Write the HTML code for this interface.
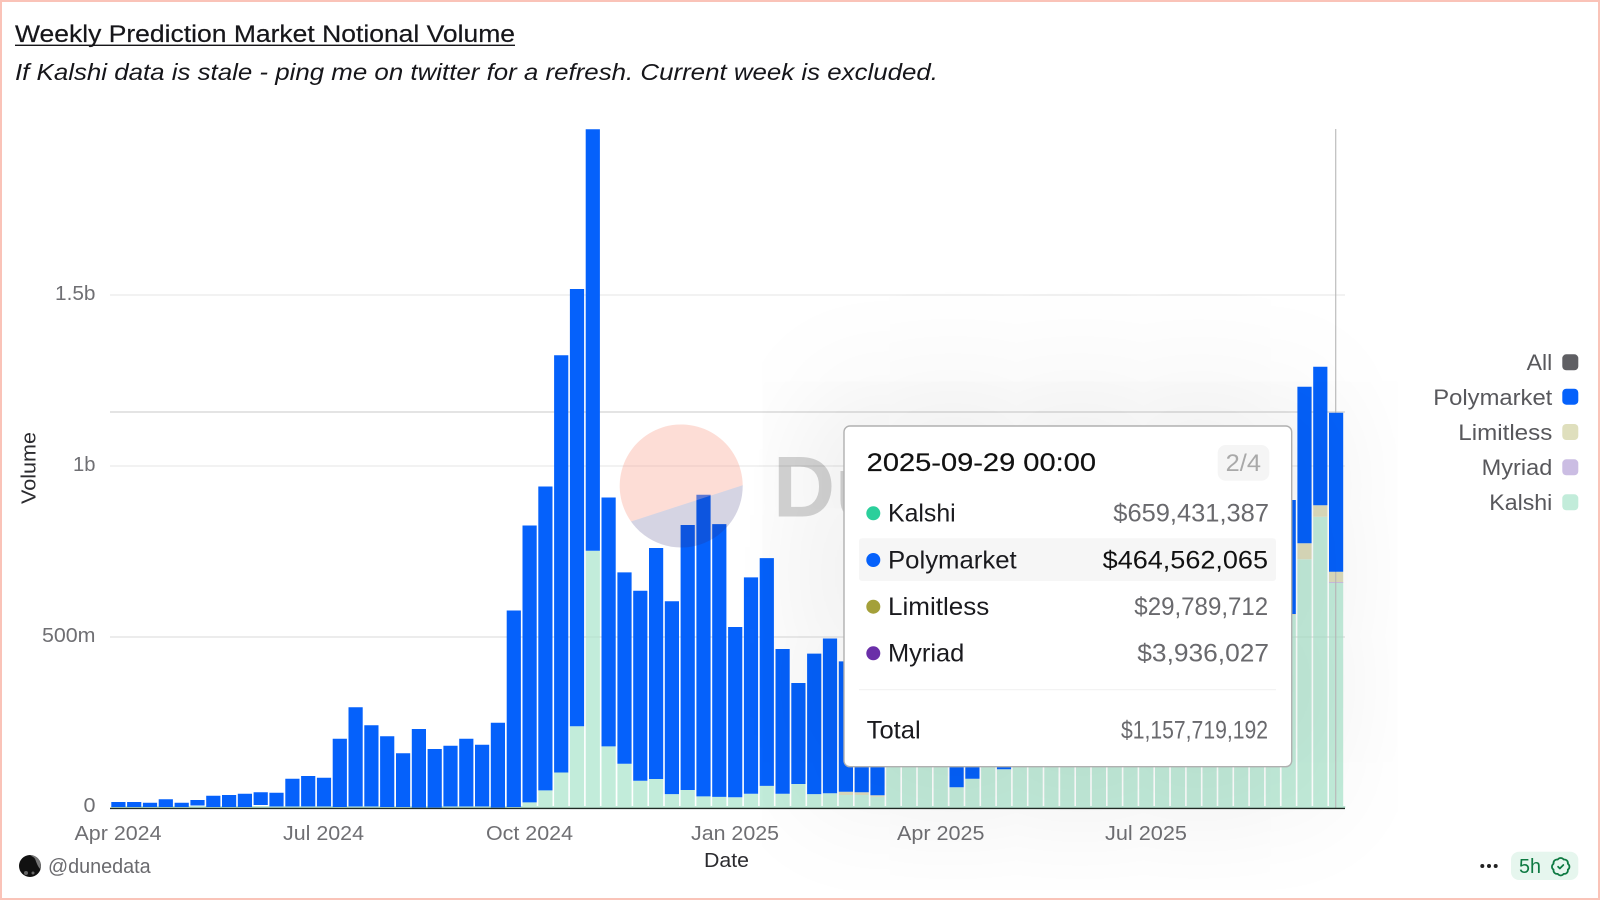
<!DOCTYPE html>
<html lang="en">
<head>
<meta charset="utf-8">
<title>Weekly Prediction Market Notional Volume</title>
<style>
html,body{margin:0;padding:0;width:1600px;height:900px;overflow:hidden;background:#fff;font-family:"Liberation Sans",sans-serif}
svg{position:absolute;left:0;top:0;display:block}
text{font-family:"Liberation Sans",sans-serif}
#shadow{position:absolute;left:844px;top:426px;width:448px;height:341px;border-radius:6px;box-shadow:0 0 300px 30px rgba(0,0,0,.085)}
#clip{position:absolute;left:0;top:0;width:1600px;height:900px;overflow:hidden}
#frame{position:absolute;left:0;top:0;width:1596px;height:896px;border:2px solid #fac3b8}
</style>
</head>
<body>
<svg width="1600" height="900" viewBox="0 0 1600 900">
  <!-- title -->
  <text x="15" y="42" font-size="24.500" fill="#16161a" stroke="#16161a" stroke-width=".2" textLength="500" lengthAdjust="spacingAndGlyphs">Weekly Prediction Market Notional Volume</text>
  <rect x="15" y="44.600" width="500" height="1.400" fill="#16161a"/>
  <text x="15" y="80" font-size="23.500" font-style="italic" fill="#16161a" textLength="923" lengthAdjust="spacingAndGlyphs">If Kalshi data is stale - ping me on twitter for a refresh. Current week is excluded.</text>

  <!-- horizontal guides behind the bars -->
  <g stroke="#e9e9e9" stroke-width="1.200">
    <path d="M110 295H1345M110 466H1345M110 637H1345"/>
  </g>
  <path d="M110 412H1345" stroke="#d4d4d4" stroke-width="1.300"/>

  <!-- green Kalshi -->
  <path fill="#c2ecda" d="M111.300 806h1234v2h-1234z"/>
  <path fill="#c2ecda" d="M506.700 807h14.200V808h-14.200zM522.500 802.400h14.200V808h-14.200zM538.300 790.400h14.200V808h-14.200zM554.100 772.500h14.200V808h-14.200zM569.900 726.200h14.200V808h-14.200zM585.700 550.800h14.200V808h-14.200zM601.500 746.400h14.200V808h-14.200zM617.400 763.800h14.200V808h-14.200zM633.200 780.800h14.200V808h-14.200zM649 779h14.200V808h-14.200zM664.800 794.100h14.200V808h-14.200zM680.600 790h14.200V808h-14.200zM696.400 796.400h14.200V808h-14.200zM712.200 796.900h14.200V808h-14.200zM728.100 797.300h14.200V808h-14.200zM743.900 793.700h14.200V808h-14.200zM759.700 785.900h14.200V808h-14.200zM775.500 793.700h14.200V808h-14.200zM791.300 784h14.200V808h-14.200zM807.100 794.100h14.200V808h-14.200zM822.900 793.200h14.200V808h-14.200zM838.800 795h14.200V808h-14.200zM854.600 795h14.200V808h-14.200zM870.400 796.700h14.200V808h-14.200zM886.200 700h14.200V808h-14.200zM902 700h14.200V808h-14.200zM917.800 700h14.200V808h-14.200zM933.600 700h14.200V808h-14.200zM949.500 787.300h14.200V808h-14.200zM965.300 778.700h14.200V808h-14.200zM981.100 700h14.200V808h-14.200zM996.900 769.300h14.200V808h-14.200zM1012.700 700h14.200V808h-14.200zM1028.500 700h14.200V808h-14.200zM1044.300 700h14.200V808h-14.200zM1060.200 700h14.200V808h-14.200zM1076 700h14.200V808h-14.200zM1091.800 700h14.200V808h-14.200zM1107.600 700h14.200V808h-14.200zM1123.400 700h14.200V808h-14.200zM1139.200 700h14.200V808h-14.200zM1155 700h14.200V808h-14.200zM1170.900 700h14.200V808h-14.200zM1186.700 700h14.200V808h-14.200zM1202.500 700h14.200V808h-14.200zM1218.300 700h14.200V808h-14.200zM1234.100 700h14.200V808h-14.200zM1249.900 700h14.200V808h-14.200zM1265.700 700h14.200V808h-14.200zM1281.600 615h14.200V808h-14.200zM1297.400 559.300h14.200V808h-14.200zM1313.200 516.700h14.200V808h-14.200zM1329 582.700h14.200V808h-14.200z"/>
  <!-- tan Limitless -->
  <path fill="#dcdcbc" d="M838.800 791.700h14.200V795h-14.200zM854.600 792.300h14.200V795h-14.200zM870.400 795.300h14.200V796.700h-14.200zM1281.600 614h14.200V615h-14.200zM1297.400 543.300h14.200V559.300h-14.200zM1313.200 505.300h14.200V516.700h-14.200zM1329 571.700h14.200V582.700h-14.200z"/>
  <rect x="1329" y="582" width="14.200" height="1" fill="#cbbde3"/>

  <!-- guides across translucent green -->
  <path d="M110 637H1345" stroke="#000" stroke-opacity=".05" stroke-width="1"/>
  <path d="M1335.700 129V808" stroke="#bdbdbd" stroke-width="1.200"/>

  <!-- blue Polymarket -->
  <path fill="#0561fb" d="M111.300 802h14.200V807h-14.200zM127.100 802h14.200V807h-14.200zM142.900 802.700h14.200V807h-14.200zM158.700 799.300h14.200V807h-14.200zM174.600 802.700h14.200V807h-14.200zM190.400 800h14.200V805.500h-14.200zM206.200 795.700h14.200V807h-14.200zM222 795h14.200V807h-14.200zM237.800 793.700h14.200V807h-14.200zM253.600 792.300h14.200V805h-14.200zM269.400 792.700h14.200V806.500h-14.200zM285.300 778.700h14.200V806.500h-14.200zM301.100 776h14.200V806.500h-14.200zM316.900 777.700h14.200V806.500h-14.200zM332.700 738.700h14.200V807h-14.200zM348.500 707.300h14.200V806.500h-14.200zM364.300 725.300h14.200V806.500h-14.200zM380.100 736.300h14.200V807h-14.200zM396 753.300h14.200V807h-14.200zM411.800 729h14.200V807.500h-14.200zM427.600 749h14.200V807.500h-14.200zM443.400 745.700h14.200V806.500h-14.200zM459.200 738.700h14.200V806.500h-14.200zM475 744.700h14.200V806.500h-14.200zM490.800 722.700h14.200V807.500h-14.200zM506.700 610.500h14.200V807h-14.200zM522.500 525.500h14.200V802.400h-14.200zM538.300 486.500h14.200V790.400h-14.200zM554.100 355.200h14.200V772.500h-14.200zM569.900 289h14.200V726.200h-14.200zM585.700 129.300h14.200V550.800h-14.200zM601.500 497.500h14.200V746.400h-14.200zM617.400 572.400h14.200V763.800h-14.200zM633.200 590.700h14.200V780.800h-14.200zM649 548h14.200V779h-14.200zM664.800 601.300h14.200V794.100h-14.200zM680.600 525h14.200V790h-14.200zM696.400 494.800h14.200V796.400h-14.200zM712.200 524.100h14.200V796.900h-14.200zM728.100 627h14.200V797.300h-14.200zM743.900 577.400h14.200V793.700h-14.200zM759.700 558.100h14.200V785.900h-14.200zM775.500 649h14.200V793.700h-14.200zM791.300 683h14.200V784h-14.200zM807.100 653.600h14.200V794.100h-14.200zM822.900 638.500h14.200V793.200h-14.200zM838.800 661.400h14.200V791.700h-14.200zM854.600 680h14.200V792.300h-14.200zM870.400 700h14.200V795.300h-14.200zM949.500 720h14.200V787.300h-14.200zM965.300 720h14.200V778.700h-14.200zM996.900 720h14.200V769.300h-14.200zM1281.600 500h14.200V614h-14.200zM1297.400 386.700h14.200V543.300h-14.200zM1313.200 366.700h14.200V505.300h-14.200zM1329 412.700h14.200V571.700h-14.200z"/>

  <!-- axis baseline -->
  <path d="M110 808.400H1345" stroke="#1f2a24" stroke-width="1.400"/>

  <!-- watermark -->
  <path d="M631 521.500A61.500 61.500 0 1 1 742.700 485.200Z" fill="#f9a08e" fill-opacity=".36"/>
  <path d="M631 521.500L742.700 485.200A61.500 61.500 0 0 1 631 521.500Z" fill="#2c2a74" fill-opacity=".2"/>
  <text x="773" y="516.500" font-size="86" font-weight="700" fill="#000" fill-opacity=".17">Dune</text>

  <!-- y labels -->
  <g font-size="20.500" fill="#6f6f73">
    <text x="55" y="300" textLength="40.500" lengthAdjust="spacingAndGlyphs">1.5b</text>
    <text x="73" y="471" textLength="22.500" lengthAdjust="spacingAndGlyphs">1b</text>
    <text x="42" y="642" textLength="53.500" lengthAdjust="spacingAndGlyphs">500m</text>
    <text x="83.500" y="812" textLength="12" lengthAdjust="spacingAndGlyphs">0</text>
  </g>
  <!-- x labels -->
  <g font-size="20" fill="#6f6f73">
    <text x="74.500" y="840" textLength="87" lengthAdjust="spacingAndGlyphs">Apr 2024</text>
    <text x="283" y="840" textLength="81" lengthAdjust="spacingAndGlyphs">Jul 2024</text>
    <text x="486" y="840" textLength="87" lengthAdjust="spacingAndGlyphs">Oct 2024</text>
    <text x="691" y="840" textLength="88" lengthAdjust="spacingAndGlyphs">Jan 2025</text>
    <text x="897" y="840" textLength="87.500" lengthAdjust="spacingAndGlyphs">Apr 2025</text>
    <text x="1105" y="840" textLength="82" lengthAdjust="spacingAndGlyphs">Jul 2025</text>
  </g>
  <text x="704" y="867" font-size="20" fill="#2b2b2f" textLength="45" lengthAdjust="spacingAndGlyphs">Date</text>
  <text transform="translate(35.500 504) rotate(-90)" font-size="20" fill="#2b2b2f" textLength="72" lengthAdjust="spacingAndGlyphs">Volume</text>

  <!-- legend -->
  <g font-size="22" fill="#58585c">
    <text x="1526.700" y="370" textLength="25.600" lengthAdjust="spacingAndGlyphs">All</text>
    <text x="1433.300" y="405" textLength="119" lengthAdjust="spacingAndGlyphs">Polymarket</text>
    <text x="1458.300" y="440" textLength="94" lengthAdjust="spacingAndGlyphs">Limitless</text>
    <text x="1481.700" y="475" textLength="70.600" lengthAdjust="spacingAndGlyphs">Myriad</text>
    <text x="1489.300" y="510" textLength="63" lengthAdjust="spacingAndGlyphs">Kalshi</text>
  </g>
  <rect x="1562.300" y="354.300" width="16" height="16" rx="4" fill="#5f5f63"/>
  <rect x="1562.300" y="388.700" width="16" height="16" rx="4" fill="#0561fb"/>
  <rect x="1562.300" y="424" width="16" height="16" rx="4" fill="#dfdfbd"/>
  <rect x="1562.300" y="459.300" width="16" height="16" rx="4" fill="#cbbde3"/>
  <rect x="1562.300" y="494.300" width="16" height="16" rx="4" fill="#c2ecda"/>

  <!-- footer left -->
  <circle cx="30" cy="866" r="11" fill="#111"/>
  <path d="M30 855a11 11 0 0 1 10.500 14c-2-1-4-6-5-9s-3-3-5.500-5z" fill="#777"/>
  <circle cx="26" cy="873" r="2" fill="#666"/>
  <circle cx="33" cy="873" r="1.500" fill="#666"/>
  <text x="48" y="873" font-size="20" fill="#6a6a6e" textLength="102.700" lengthAdjust="spacingAndGlyphs">@dunedata</text>

  <!-- footer right -->
  <circle cx="1482.300" cy="866" r="2" fill="#222"/>
  <circle cx="1489" cy="866" r="2" fill="#222"/>
  <circle cx="1495.700" cy="866" r="2" fill="#222"/>
  <rect x="1511" y="851.700" width="67.300" height="28.300" rx="8" fill="#e6f6ee"/>
  <text x="1519" y="873" font-size="20" fill="#0e7a42" textLength="22" lengthAdjust="spacingAndGlyphs">5h</text>
  <g transform="translate(1550.200 856.200) scale(.875)" fill="none" stroke="#0e7a42" stroke-width="2" stroke-linecap="round" stroke-linejoin="round">
    <path d="M3.850 8.620a4 4 0 0 1 4.780-4.770 4 4 0 0 1 6.740 0 4 4 0 0 1 4.780 4.780 4 4 0 0 1 0 6.740 4 4 0 0 1-4.770 4.780 4 4 0 0 1-6.750 0 4 4 0 0 1-4.780-4.770 4 4 0 0 1 0-6.760Z"/>
    <path d="m9 12 2 2 4-4"/>
  </g>
</svg>

<div id="clip"><div id="shadow"></div></div>

<svg width="1600" height="900" viewBox="0 0 1600 900">
  <rect x="844" y="426" width="447.700" height="340.700" rx="6" fill="#fff" stroke="#b0b0b0" stroke-width="1.400"/>
  <text x="866.700" y="471" font-size="25" fill="#111" stroke="#111" stroke-width=".2" textLength="229.300" lengthAdjust="spacingAndGlyphs">2025-09-29 00:00</text>
  <rect x="1217.700" y="445" width="51.600" height="35.700" rx="8" fill="#f5f5f5"/>
  <text x="1225.700" y="471" font-size="24" fill="#a9a9a9" textLength="35.300" lengthAdjust="spacingAndGlyphs">2/4</text>

  <rect x="859" y="538.300" width="417" height="42.700" rx="3" fill="#f6f6f6"/>

  <circle cx="873.300" cy="513.300" r="7" fill="#2bcf9b"/>
  <circle cx="873.300" cy="560" r="7" fill="#0561fb"/>
  <circle cx="873.300" cy="606.700" r="7" fill="#a4a03a"/>
  <circle cx="873.300" cy="653.300" r="7" fill="#6a2fa8"/>

  <g font-size="25" fill="#1a1a1e">
    <text x="888" y="521.700" textLength="67.700" lengthAdjust="spacingAndGlyphs">Kalshi</text>
    <text x="888" y="568.300" textLength="128.700" lengthAdjust="spacingAndGlyphs">Polymarket</text>
    <text x="888" y="615" textLength="101.300" lengthAdjust="spacingAndGlyphs">Limitless</text>
    <text x="888" y="661.700" textLength="76.300" lengthAdjust="spacingAndGlyphs">Myriad</text>
    <text x="866.700" y="738.300" textLength="54" lengthAdjust="spacingAndGlyphs">Total</text>
  </g>
  <g font-size="25" fill="#69696d">
    <text x="1113.300" y="521.700" textLength="155.700" lengthAdjust="spacingAndGlyphs">$659,431,387</text>
    <text x="1102.700" y="568.300" fill="#111" textLength="165.300" lengthAdjust="spacingAndGlyphs">$464,562,065</text>
    <text x="1134.300" y="615" textLength="133.900" lengthAdjust="spacingAndGlyphs">$29,789,712</text>
    <text x="1137.300" y="661.700" textLength="131.700" lengthAdjust="spacingAndGlyphs">$3,936,027</text>
    <text x="1121" y="738.300" textLength="147" lengthAdjust="spacingAndGlyphs">$1,157,719,192</text>
  </g>
  <rect x="859" y="689.200" width="417" height="1" fill="#f0f0f0"/>
</svg>

<div id="frame"></div>
</body>
</html>
